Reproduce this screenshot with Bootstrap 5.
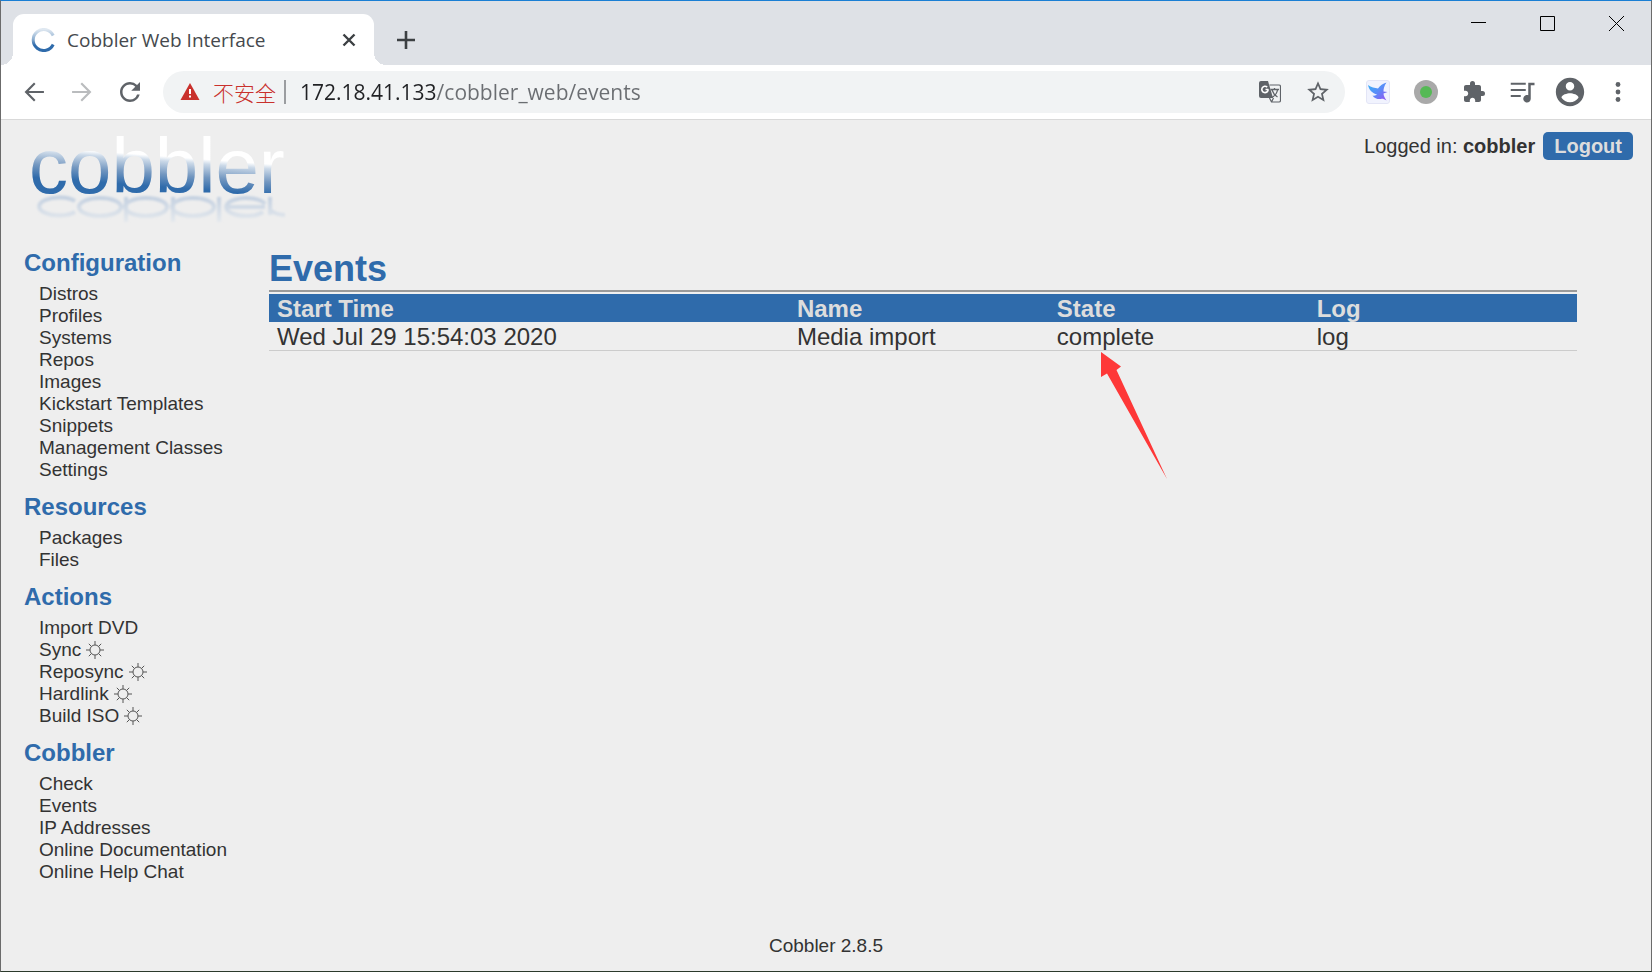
<!DOCTYPE html>
<html lang="en">
<head>
<meta charset="utf-8">
<meta name="viewport" content="width=device-width, initial-scale=1">
<title>Cobbler Web Interface</title>
<link href="https://cdn.jsdelivr.net/npm/bootstrap@5.3.0/dist/css/bootstrap.min.css" rel="stylesheet">
<style>
  :root { --cob-blue: #2f6bab; --chrome-text: #5f6368; }
  body { font-family: "Liberation Sans", Arial, sans-serif; color: #333; background: #eee; }
  .window-frame { border: 1px solid #6b6b6b; border-top-color: #1a7fd4; border-bottom-color: #2b3a2b; }
  .ui-btn { border: 0; background: none; padding: 0; display: flex; align-items: center; justify-content: center; color: var(--chrome-text); }

  /* browser chrome */
  .tab-strip { background: #dee1e6; height: 64px; }
  .browser-tab { position: relative; width: 361px; height: 51px; margin-left: 12px; padding: 0 18px; background: #fff; border-radius: 11px 11px 0 0; }
  .browser-tab::before, .browser-tab::after { content: ""; position: absolute; bottom: 0; width: 12px; height: 12px; }
  .browser-tab::before { left: -12px; background: radial-gradient(circle at 0 0, transparent 12px, #fff 12px); }
  .browser-tab::after { right: -12px; background: radial-gradient(circle at 100% 0, transparent 12px, #fff 12px); }
  .tab-title { font: 19px/26px "Open Sans", "Noto Sans", sans-serif; color: #45494d; }
  .new-tab { width: 40px; height: 51px; margin-left: 12px; color: #3c4043; }
  .win-btn { width: 69px; height: 45px; color: #000; }
  .toolbar-row { background: #fff; height: 55px; padding: 0 9px; border-bottom: 1px solid #d9d9d9; }
  .tool-btn { width: 48px; height: 42px; }
  .omnibox { background: #f1f3f4; height: 42px; border-radius: 21px; margin: 0 9px; padding: 0 3px 0 17px; }
  .unsafe-label { font: 21px/30px "Noto Sans CJK SC", sans-serif; font-weight: 300; color: #c9302c; margin: 0 8px 0 13px; }
  .omni-sep { width: 2px; height: 24px; background: #9b9da0; margin-right: 14px; }
  .url-input { border: 0; outline: 0; padding: 0; height: 32px; font: 21px/30px "Open Sans", "Noto Sans", sans-serif;
    color: transparent; background: linear-gradient(90deg, #202124 137px, #6a6d71 137px); -webkit-background-clip: text; background-clip: text; }

  /* page */
  .logo-link { margin-left: 24px; }
  .login-info { font-size: 20px; line-height: 28px; margin: 12px 18px 0 0; }
  .logout-btn { background: var(--cob-blue); color: #ddd; border: 0; border-radius: 5px; height: 28px; padding: 0 11px; }
  .side-menu { width: 268px; padding: 1px 0 0 23px; flex: none; }
  .side-menu h2 { font-size: 24px; line-height: 28px; font-weight: 700; color: var(--cob-blue); margin: 0 0 6px; }
  .side-menu ul { margin: 0 0 12px; padding-left: 15px; }
  .side-menu li { font-size: 19px; line-height: 22px; }
  .side-menu a, .event-table a { color: #333; text-decoration: none; }
  .side-menu svg { display: block; }
  .events-main { margin-right: 74px; }
  .events-main h1 { font-size: 36px; line-height: 42px; font-weight: 700; color: var(--cob-blue); margin: 0; }
  .events-main hr { margin: 0; opacity: 1; border-top: 2px solid #9a9a9a; border-bottom: 2px solid #f0f0f0; }
  .event-table { width: 100%; table-layout: fixed; font-size: 24px; line-height: 27px; }
  .event-table th { background: var(--cob-blue); color: #ddd; font-weight: 700; padding: 1px 8px 0; }
  .event-table td { padding: 1px 8px 0; border-bottom: 1px solid #ccc; }
  .col-start { width: 39.75%; } .col-mid { width: 19.87%; }
  .red-arrow { position: absolute; left: 52px; top: 30px; }
  .page-foot { font-size: 19px; line-height: 22px; padding-bottom: 14px; }
</style>
</head>
<body>
<div class="window-frame min-vh-100 d-flex flex-column">
  <header>
    <div class="tab-strip d-flex align-items-end">
      <div class="browser-tab d-flex align-items-center">
        <svg width="24" height="24" viewBox="0 0 24 24" aria-hidden="true">
          <defs><linearGradient id="ringFill" x1="0" y1="0" x2="0" y2="1"><stop offset="0" stop-color="#dfe8f1"/><stop offset=".45" stop-color="#8fb0d1"/><stop offset=".75" stop-color="#2f6bab"/></linearGradient></defs>
          <path d="M22.200 7.500A10.500 10.500 0 1 0 22.200 16.500" fill="none" stroke="url(#ringFill)" stroke-width="3"/>
        </svg>
        <span class="tab-title ms-2 ps-1 flex-grow-1">Cobbler Web Interface</span>
        <button class="ui-btn" aria-label="Close tab"><svg width="14" height="14" viewBox="0 0 14 14" stroke="#3c4043" stroke-width="2.400"><path d="M1.500 1.500l11 11M12.500 1.500l-11 11"/></svg></button>
      </div>
      <button class="ui-btn new-tab" aria-label="New tab"><svg width="18" height="18" viewBox="0 0 18 18" stroke="currentColor" stroke-width="2.600"><path d="M9 0v18M0 9h18"/></svg></button>
      <div class="d-flex ms-auto align-self-start">
        <button class="ui-btn win-btn" aria-label="Minimize"><svg width="15" height="15" viewBox="0 0 15 15"><path d="M0 6.500h15" stroke="currentColor"/></svg></button>
        <button class="ui-btn win-btn" aria-label="Maximize"><svg width="15" height="15" viewBox="0 0 15 15"><path d="M.5.5h14v14H.5z" fill="none" stroke="currentColor"/></svg></button>
        <button class="ui-btn win-btn" aria-label="Close"><svg width="15" height="15" viewBox="0 0 15 15"><path d="M0 0l15 15M15 0L0 15" stroke="currentColor"/></svg></button>
      </div>
    </div>
    <div class="toolbar-row d-flex align-items-center">
      <button class="ui-btn tool-btn" aria-label="Back"><svg width="28" height="28" viewBox="0 0 24 24" fill="currentColor"><path d="M20.500 11.100H7.400l5.900-5.900L12 3.900 3.900 12l8.100 8.100 1.300-1.300-5.900-5.900h13.100z"/></svg></button>
      <button class="ui-btn tool-btn" aria-label="Forward"><svg width="28" height="28" viewBox="0 0 24 24" fill="#babcbe"><path d="M3.500 11.100h13.100l-5.900-5.900L12 3.900l8.100 8.100-8.100 8.100-1.300-1.300 5.900-5.900H3.500z"/></svg></button>
      <button class="ui-btn tool-btn" aria-label="Reload"><svg width="30" height="30" viewBox="0 0 24 24" fill="currentColor"><path d="M17.650 6.350A7.958 7.958 0 0 0 12 4c-4.420 0-7.990 3.580-7.990 8s3.570 8 7.990 8c3.730 0 6.840-2.550 7.730-6h-2.080A5.990 5.990 0 0 1 12 18c-3.310 0-6-2.690-6-6s2.690-6 6-6c1.660 0 3.140.69 4.220 1.780L13 11h7V4l-2.350 2.350z"/></svg></button>
      <div class="omnibox d-flex align-items-center flex-grow-1">
        <svg width="20" height="18" viewBox="0 0 20 18" aria-hidden="true"><path d="M10 0l9.500 17H.5z" fill="#c9302c"/><path d="M9 6h2v5H9zM9 12.500h2v2H9z" fill="#fff"/></svg>
        <label for="address" class="unsafe-label text-nowrap">不安全</label>
        <span class="omni-sep"></span>
        <input id="address" class="url-input flex-grow-1" type="text" value="172.18.41.133/cobbler_web/events">
        <button class="ui-btn tool-btn" aria-label="Translate"><svg width="22" height="22" viewBox="0 0 22 22"><path d="M2 0h7l5 17H2a2 2 0 0 1-2-2V2a2 2 0 0 1 2-2z" fill="#5f6368"/><path d="M9.400 8.500H6.500M9.200 8.500a3.200 3.200 0 1 1-1-2.400" fill="none" stroke="#fff" stroke-width="1.600"/><path d="M10.500 4H20a1.500 1.500 0 0 1 1.500 1.500v14A1.500 1.500 0 0 1 20 21h-7.500l-2-4M12.500 21l2-4" fill="none" stroke="#5f6368" stroke-width="1.200"/><path d="M11.500 8.500H20M15.500 7v1.500M13 9c1 3 3 5.500 5.500 7M18.500 9c-.5 3-3 6-5.500 7.500" fill="none" stroke="#5f6368" stroke-width="1.300"/></svg></button>
        <button class="ui-btn tool-btn" aria-label="Bookmark this page"><svg width="26" height="26" viewBox="0 0 24 24" fill="currentColor"><path d="M22 9.240l-7.190-.62L12 2 9.190 8.630 2 9.240l5.460 4.730L5.820 21 12 17.270 18.180 21l-1.630-7.030L22 9.240zM12 15.400l-3.760 2.270 1-4.280-3.320-2.880 4.380-.38L12 6.100l1.710 4.040 4.380.38-3.320 2.880 1 4.280L12 15.400z"/></svg></button>
      </div>
      <button class="ui-btn tool-btn" aria-label="Bird extension"><svg width="24" height="24" viewBox="0 0 24 24"><defs><linearGradient id="birdFill" x1="0" y1="0" x2="1" y2="1"><stop offset="0" stop-color="#35b5f5"/><stop offset=".5" stop-color="#5b8cf8"/><stop offset="1" stop-color="#9a4df0"/></linearGradient></defs><rect x=".5" y=".5" width="23" height="23" rx="2.500" fill="#f1f3fe" stroke="#e3e5f6"/><path d="M2 5c3 2.500 7 3 10 3.500C14 5.500 17 3.500 20.500 2.500 18 6 17.500 9 17.500 11.500l4 .5-4 1.500c0 2 1.500 5 3 7-2.500-1.500-4-2-5.500-1.500-3 .5-6.500-.5-8.500-3.500 2 .5 3.500 0 4.500-1C6.500 13.500 3 10 2 5z" fill="url(#birdFill)"/></svg></button>
      <button class="ui-btn tool-btn" aria-label="Status extension"><svg width="24" height="24" viewBox="0 0 24 24"><circle cx="12" cy="12" r="12" fill="#a9a9a9"/><circle cx="12" cy="12" r="6" fill="#55b955"/></svg></button>
      <button class="ui-btn tool-btn" aria-label="Extensions"><svg width="24" height="24" viewBox="0 0 24 24" fill="currentColor"><path d="M20.500 11H19V7c0-1.100-.9-2-2-2h-4V3.500a2.500 2.500 0 0 0-5 0V5H4c-1.100 0-1.990.9-1.990 2v3.800H3.500c1.490 0 2.700 1.210 2.700 2.700s-1.210 2.700-2.700 2.700H2V20c0 1.100.9 2 2 2h3.800v-1.500c0-1.490 1.210-2.700 2.700-2.700 1.490 0 2.700 1.210 2.700 2.700V22H17c1.100 0 2-.9 2-2v-4h1.500a2.500 2.500 0 0 0 0-5z"/></svg></button>
      <button class="ui-btn tool-btn" aria-label="Media controls"><svg width="30" height="30" viewBox="0 0 24 24" fill="currentColor"><path d="M15 4.500H3v1.700h12zM15 9.500H3v1.700h12zM3 16h8v-1.700H3zM17 4.500v10.100c-.3-.1-.65-.18-1-.18-1.660 0-3 1.340-3 3s1.340 3 3 3 3-1.340 3-3V6.500h3v-2z"/></svg></button>
      <button class="ui-btn tool-btn" aria-label="Profile"><svg width="34" height="34" viewBox="0 0 24 24" fill="currentColor"><path d="M12 2C6.480 2 2 6.480 2 12s4.480 10 10 10 10-4.480 10-10S17.520 2 12 2zm0 3c1.660 0 3 1.340 3 3s-1.340 3-3 3-3-1.340-3-3 1.340-3 3-3zm0 14.200c-2.500 0-4.710-1.280-6-3.220.03-1.990 4-3.080 6-3.080 1.990 0 5.970 1.090 6 3.080-1.290 1.940-3.500 3.220-6 3.220z"/></svg></button>
      <button class="ui-btn tool-btn" aria-label="Menu"><svg width="6" height="20" viewBox="0 0 6 20" fill="currentColor"><circle cx="3" cy="2.500" r="2.400"/><circle cx="3" cy="10" r="2.400"/><circle cx="3" cy="17.500" r="2.400"/></svg></button>
    </div>
  </header>

  <div class="d-flex justify-content-between align-items-start">
    <a href="#" class="logo-link" aria-label="Cobbler home">
      <svg class="d-block" width="270" height="128" viewBox="0 -12 270 128">
        <defs>
          <linearGradient id="wordFill" gradientUnits="userSpaceOnUse" x1="137" y1="18" x2="134" y2="58">
            <stop offset=".15" stop-color="#fff"/><stop offset=".27" stop-color="#cbd9e8"/><stop offset=".6" stop-color="#7397c0"/><stop offset=".92" stop-color="#2f6bab"/>
          </linearGradient>
          <linearGradient id="mirrorFill" gradientUnits="userSpaceOnUse" x1="0" y1="64" x2="0" y2="92">
            <stop offset="0" stop-color="#c3d0e0"/><stop offset="1" stop-color="#e6eaee"/>
          </linearGradient>
          <filter id="mirrorBlur" x="-5%" y="-20%" width="110%" height="140%"><feGaussianBlur stdDeviation="1"/></filter>
        </defs>
        <text x="4" y="61" font-family="Liberation Sans, Arial, sans-serif" font-size="78" fill="url(#wordFill)">cobbler</text>
        <g fill="none" stroke="url(#mirrorFill)" stroke-width="4" filter="url(#mirrorBlur)">
          <path d="M50 69a20 9 0 1 0 0 11"/>
          <ellipse cx="75" cy="75" rx="21" ry="9"/><ellipse cx="121" cy="75" rx="21" ry="9"/><ellipse cx="168" cy="75" rx="21" ry="9"/>
          <path d="M202 75h38M240 72a20 9 0 1 0-2 8"/>
          <path d="M101 65l.1 25M148 65l.1 25M194 65l.1 25M245 65l.1 18M245 78q6 5 15 5"/>
        </g>
      </svg>
    </a>
    <div class="login-info d-flex align-items-center">
      <span class="me-2">Logged in: <strong>cobbler</strong></span>
      <button class="logout-btn fw-bold">Logout</button>
    </div>
  </div>

  <svg class="d-none"><symbol id="gear" viewBox="0 0 18 18"><circle cx="9" cy="9" r="5" fill="none" stroke="#555"/><path d="M9 0v4M9 14v4M0 9h4M14 9h4M2.800 2.800l2.700 2.700M12.500 12.500l2.700 2.700M2.800 15.200l2.700-2.700M12.500 5.500l2.700-2.700" stroke="#555"/></symbol></svg>

  <div class="d-flex flex-grow-1 align-items-start">
    <nav class="side-menu" aria-label="Main">
      <h2>Configuration</h2>
      <ul class="list-unstyled">
        <li><a href="#">Distros</a></li><li><a href="#">Profiles</a></li><li><a href="#">Systems</a></li><li><a href="#">Repos</a></li><li><a href="#">Images</a></li><li><a href="#">Kickstart Templates</a></li><li><a href="#">Snippets</a></li><li><a href="#">Management Classes</a></li><li><a href="#">Settings</a></li>
      </ul>
      <h2>Resources</h2>
      <ul class="list-unstyled">
        <li><a href="#">Packages</a></li><li><a href="#">Files</a></li>
      </ul>
      <h2>Actions</h2>
      <ul class="list-unstyled">
        <li><a href="#">Import DVD</a></li>
        <li><a href="#" class="d-flex align-items-center">Sync<svg class="ms-1" width="20" height="18"><use href="#gear"/></svg></a></li>
        <li><a href="#" class="d-flex align-items-center">Reposync<svg class="ms-1" width="20" height="18"><use href="#gear"/></svg></a></li>
        <li><a href="#" class="d-flex align-items-center">Hardlink<svg class="ms-1" width="20" height="18"><use href="#gear"/></svg></a></li>
        <li><a href="#" class="d-flex align-items-center">Build ISO<svg class="ms-1" width="20" height="18"><use href="#gear"/></svg></a></li>
      </ul>
      <h2>Cobbler</h2>
      <ul class="list-unstyled">
        <li><a href="#">Check</a></li><li><a href="#">Events</a></li><li><a href="#">IP Addresses</a></li><li><a href="#">Online Documentation</a></li><li><a href="#">Online Help Chat</a></li>
      </ul>
    </nav>
    <main class="events-main flex-grow-1">
      <h1>Events</h1>
      <hr>
      <table class="event-table">
        <thead><tr><th scope="col" class="col-start">Start Time</th><th scope="col" class="col-mid">Name</th><th scope="col" class="col-mid">State</th><th scope="col">Log</th></tr></thead>
        <tbody><tr>
          <td>Wed Jul 29 15:54:03 2020</td><td>Media import</td>
          <td class="position-relative">complete<svg class="red-arrow" width="67" height="128" viewBox="0 0 67 128" aria-hidden="true"><path d="M0 0l20 14.500-4.500 3.500L66 127 6 21.500 0 25z" fill="#fe3838"/></svg></td>
          <td><a href="#">log</a></td>
        </tr></tbody>
      </table>
    </main>
  </div>
  <footer class="page-foot text-center">Cobbler 2.8.5</footer>
</div>
<script src="https://cdn.jsdelivr.net/npm/bootstrap@5.3.0/dist/js/bootstrap.bundle.min.js"></script>
</body>
</html>
